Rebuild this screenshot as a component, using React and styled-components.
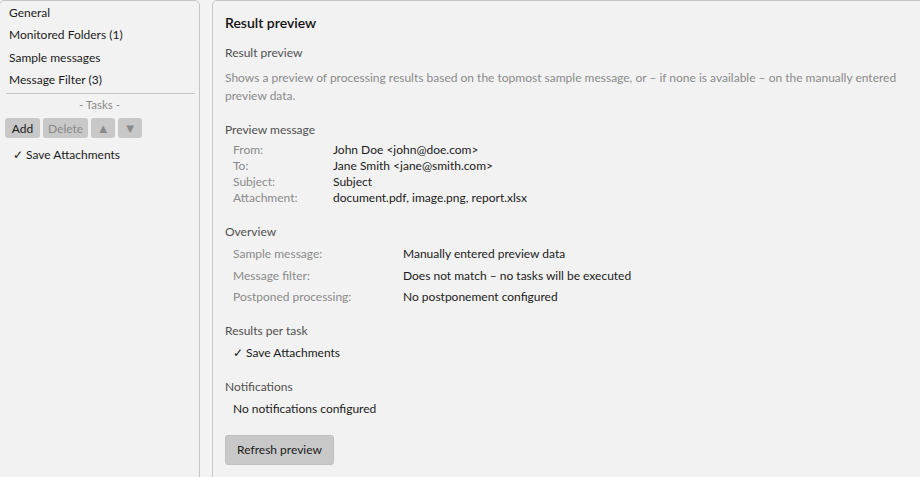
import React from 'react';
import styled, { createGlobalStyle } from 'styled-components';

const Global = createGlobalStyle`
html, body {
  margin: 0;
  padding: 0;
  height: 100%;
  overflow: hidden;
  background: #f3f3f3;
}
#root {
  height: 100%;
}
`;

const nav = ['General', 'Monitored Folders (1)', 'Sample messages', 'Message Filter (3)'];

const message = [
  ['From:', 'John Doe <john@doe.com>'],
  ['To:', 'Jane Smith <jane@smith.com>'],
  ['Subject:', 'Subject'],
  ['Attachment:', 'document.pdf, image.png, report.xlsx'],
];

const overview = [
  ['Sample message:', 'Manually entered preview data'],
  ['Message filter:', 'Does not match \u2013 no tasks will be executed'],
  ['Postponed processing:', 'No postponement configured'],
];

const App = () => {
  return (
    <Page>
      <Global />
      <Sidebar>
        {nav.map((n) => (
          <NavItem key={n}>{n}</NavItem>
        ))}
        <Divider />
        <TasksLabel>- Tasks -</TasksLabel>
        <Toolbar>
          <SmallButton>Add</SmallButton>
          <SmallButton disabled>Delete</SmallButton>
          <SmallButton disabled narrow>▲</SmallButton>
          <SmallButton disabled narrow>▼</SmallButton>
        </Toolbar>
        <TaskItem>✓ Save Attachments</TaskItem>
      </Sidebar>
      <Main>
        <Title>Result preview</Title>
        <Section gap="16px">
          <Heading gap="7px">Result preview</Heading>
          <Description>
            Shows a preview of processing results based on the topmost sample message, or – if none is
            available – on the manually entered preview data.
          </Description>
        </Section>
        <Section gap="18px">
          <Heading>Preview message</Heading>
          <Grid cols="100px" rowHeight="16px">
            {message.map(([k, v]) => (
              <React.Fragment key={k}>
                <Label>{k}</Label>
                <Value>{v}</Value>
              </React.Fragment>
            ))}
          </Grid>
        </Section>
        <Section>
          <Heading>Overview</Heading>
          <Grid cols="170px" rowHeight="21.5px">
            {overview.map(([k, v]) => (
              <React.Fragment key={k}>
                <Label>{k}</Label>
                <Value>{v}</Value>
              </React.Fragment>
            ))}
          </Grid>
        </Section>
        <Section>
          <Heading>Results per task</Heading>
          <Line>✓ Save Attachments</Line>
        </Section>
        <Section gap="15px">
          <Heading>Notifications</Heading>
          <Line>No notifications configured</Line>
        </Section>
        <RefreshButton>Refresh preview</RefreshButton>
      </Main>
    </Page>
  );
};

export default App;

const Page = styled.div`
display: flex;
gap: 12px;
height: 100%;
font-family: "Segoe UI", Lato, "Noto Sans", sans-serif;
font-size: 12px;
color: #1b1b1b;
`;

const Panel = styled.div`
background: #f2f2f2;
border: 1px solid #c6c6c6;
border-radius: 5px;
height: calc(100% + 20px);
box-sizing: border-box;
`;

const Sidebar = styled(Panel)`
width: 201px;
margin-left: -1px;
flex-shrink: 0;
display: flex;
flex-direction: column;
padding: 1px 4px 0 4px;
`;

const NavItem = styled.div`
line-height: 22.3px;
padding-left: 5px;
`;

const Divider = styled.div`
height: 1px;
background: #c8c8c8;
margin: 2px 0 0 2px;
`;

const TasksLabel = styled.div`
text-align: center;
color: #8a8a8a;
font-size: 11.5px;
line-height: 20px;
margin: 1px 0 3px;
`;

const Toolbar = styled.div`
display: flex;
gap: 3px;
padding-left: 1px;
`;

const SmallButton = styled.button`
font-family: inherit;
font-size: ${(p) => (p.narrow ? '13px' : '12px')};
height: 20px;
padding: 0 ${(p) => (p.narrow ? '0' : '5px')};
width: ${(p) => (p.narrow ? '24px' : 'auto')};
min-width: ${(p) => (p.narrow ? '24px' : '35px')};
border: none;
border-radius: 3px;
background: #c8c8c8;
color: ${(p) => (p.disabled ? '#8a8a8a' : '#1b1b1b')};
display: flex;
align-items: center;
justify-content: center;
`;

const TaskItem = styled.div`
margin-top: 8px;
padding-left: 9px;
line-height: 18px;
`;

const Main = styled(Panel)`
flex: 1;
margin-right: -20px;
padding: 11px 30px 0 12px;
`;

const Title = styled.div`
font-size: 14px;
font-weight: 600;
color: #111;
line-height: 22px;
margin-bottom: 10px;
`;

const Section = styled.div`
margin-bottom: ${(p) => p.gap || '14px'};
`;

const Heading = styled.div`
color: #505050;
font-size: 12px;
line-height: 18px;
margin-bottom: ${(p) => p.gap || '2px'};
`;

const Description = styled.div`
color: #8a8a8a;
line-height: 18px;
max-width: 690px;
`;

const Grid = styled.div`
display: grid;
grid-template-columns: ${(p) => p.cols} 1fr;
grid-auto-rows: ${(p) => p.rowHeight};
align-items: center;
padding-left: 8px;
`;

const Label = styled.div`
color: #8a8a8a;
`;

const Value = styled.div`
color: #1b1b1b;
`;

const Line = styled.div`
padding-left: 8px;
line-height: 22px;
`;

const RefreshButton = styled.button`
font-family: inherit;
font-size: 12px;
color: #1b1b1b;
background: #c8c8c8;
border: 1px solid #c0c0c0;
border-radius: 3px;
height: 30px;
padding: 0 11px;
width: 109px;
`;
